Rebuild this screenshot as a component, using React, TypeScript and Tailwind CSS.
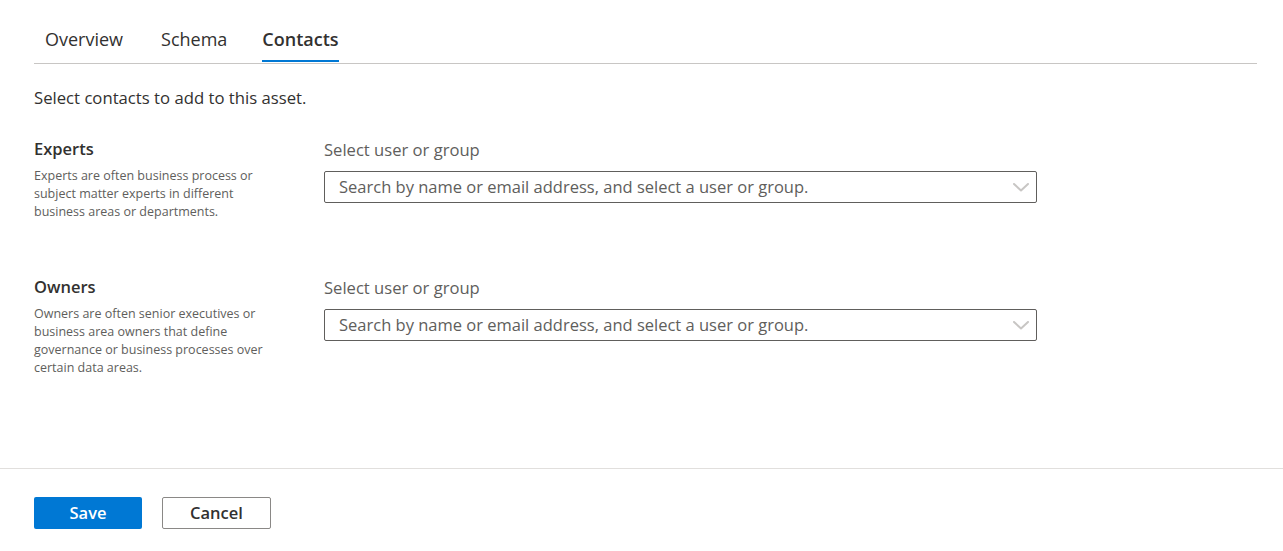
import React from "react";

function Chevron() {
  return (
    <svg width="16" height="9" viewBox="0 0 16 9" fill="none">
      <polyline points="1,1 8,7.5 15,1" stroke="#c8c6c4" strokeWidth="2" strokeLinecap="round" strokeLinejoin="round" />
    </svg>
  );
}

function Section({ title, lines }: { title: string; lines: string[] }) {
  return (
    <div className="flex">
      <div className="w-[290px] shrink-0">
        <div className="text-[16.5px] leading-[20px] font-semibold text-[#323130]">{title}</div>
        <div className="mt-[8px] text-[12.5px] leading-[18px] text-[#605e5c]">
          {lines.map((l) => (
            <div key={l}>{l}</div>
          ))}
        </div>
      </div>
      <div className="w-[713px]">
        <div className="mt-[1px] text-[16.6px] leading-[20px] text-[#605e5c]">Select user or group</div>
        <div className="mt-[11px] h-[32px] border border-[#605e5c] rounded-[2px] flex items-center pl-[14px] pr-[7px]">
          <span className="flex-1 text-[16.5px] text-[#605e5c]">Search by name or email address, and select a user or group.</span>
          <Chevron />
        </div>
      </div>
    </div>
  );
}

export default function App() {
  return (
    <div className="w-full h-[551px] bg-white font-['Open_Sans','Noto_Sans',sans-serif] text-[#323130]">
      <div className="h-[468px] pl-[34px] pr-[26px]">
        <div className="flex items-start h-[64px] border-b border-[#c8c6c4] pt-[27px]">
          <div className="ml-[11px] flex flex-col">
            <span className="text-[18px] leading-[24px] text-[#323130]">Overview</span>
          </div>
          <div className="ml-[38px] flex flex-col">
            <span className="text-[18px] leading-[24px] text-[#323130]">Schema</span>
          </div>
          <div className="ml-[35px] flex flex-col">
            <span className="text-[18px] leading-[24px] font-semibold text-[#323130]">Contacts</span>
            <div className="mt-[9px] h-[2px] bg-[#0078d4]" />
          </div>
        </div>
        <div className="mt-[24px] text-[16.7px] leading-[20px] text-[#323130]">Select contacts to add to this asset.</div>
        <div className="mt-[31px]">
          <Section
            title="Experts"
            lines={["Experts are often business process or", "subject matter experts in different", "business areas or departments."]}
          />
        </div>
        <div className="mt-[56px]">
          <Section
            title="Owners"
            lines={[
              "Owners are often senior executives or",
              "business area owners that define",
              "governance or business processes over",
              "certain data areas.",
            ]}
          />
        </div>
      </div>
      <div className="border-t border-[#e1dfdd] pt-[28px] pl-[34px] flex gap-[20px]">
        <button className="w-[108px] h-[32px] rounded-[2px] bg-[#0078d4] text-white text-[16.5px] font-semibold">Save</button>
        <button className="w-[109px] h-[32px] rounded-[2px] border border-[#8a8886] bg-white text-[#323130] text-[16.5px] font-semibold">Cancel</button>
      </div>
    </div>
  );
}
